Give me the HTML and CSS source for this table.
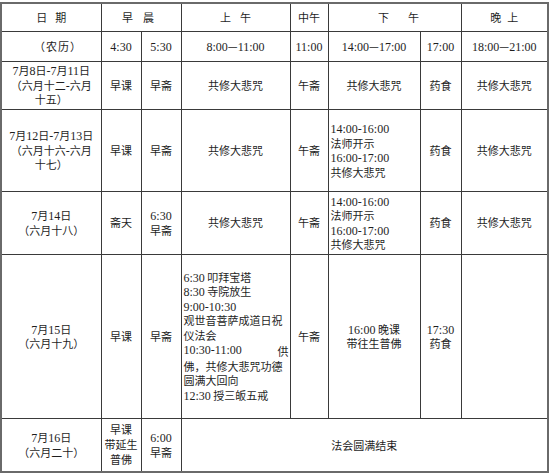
FILE: index.html
```html
<!DOCTYPE html>
<html lang="zh">
<head>
<meta charset="utf-8">
<title>法会日程</title>
<link rel="stylesheet" href="styles.css">
</head>
<body>
<table class="sched">
  <colgroup>
    <col class="c1"><col class="c2"><col class="c3"><col class="c4"><col class="c5"><col class="c6"><col class="c7"><col class="c8">
  </colgroup>
  <tr class="r1">
    <td><span class="h-date">日期</span></td>
    <td colspan="2"><span class="h-morn">早晨</span></td>
    <td><span class="h-am">上午</span></td>
    <td>中午</td>
    <td colspan="2"><span class="h-pm">下午</span></td>
    <td><span class="h-eve">晚上</span></td>
  </tr>
  <tr class="r2">
    <td class="lunar"><span class="lunar-text">（农历）</span></td>
    <td><span class="n">4:30</span></td>
    <td><span class="n">5:30</span></td>
    <td><span class="n">8:00</span>—<span class="n">11:00</span></td>
    <td><span class="n">11:00</span></td>
    <td><span class="n">14:00</span>—<span class="n">17:00</span></td>
    <td><span class="n">17:00</span></td>
    <td><span class="n">18:00</span>—<span class="n">21:00</span></td>
  </tr>
  <tr class="r3">
    <td><span class="n">7</span>月<span class="n">8</span>日<span class="n">-7</span>月<span class="n">11</span>日<br>（六月十二<span class="n">-</span>六月<br>十五）</td>
    <td>早课</td>
    <td>早斋</td>
    <td>共修大悲咒</td>
    <td>午斋</td>
    <td>共修大悲咒</td>
    <td>药食</td>
    <td>共修大悲咒</td>
  </tr>
  <tr class="r4">
    <td><span class="n">7</span>月<span class="n">12</span>日<span class="n">-7</span>月<span class="n">13</span>日<br>（六月十六<span class="n">-</span>六月<br>十七）</td>
    <td>早课</td>
    <td>早斋</td>
    <td>共修大悲咒</td>
    <td>午斋</td>
    <td class="left"><span class="n">14:00-16:00</span><br>法师开示<br><span class="n">16:00-17:00</span><br>共修大悲咒</td>
    <td>药食</td>
    <td>共修大悲咒</td>
  </tr>
  <tr class="r5">
    <td><span class="n">7</span>月<span class="n">14</span>日<br>（六月十八）</td>
    <td>斋天</td>
    <td><span class="n">6:30</span><br>早斋</td>
    <td>共修大悲咒</td>
    <td>午斋</td>
    <td class="left"><span class="n">14:00-16:00</span><br>法师开示<br><span class="n">16:00-17:00</span><br>共修大悲咒</td>
    <td>药食</td>
    <td>共修大悲咒</td>
  </tr>
  <tr class="r6">
    <td><span class="n">7</span>月<span class="n">15</span>日<br>（六月十九）</td>
    <td>早课</td>
    <td>早斋</td>
    <td class="left long"><span class="n">6:30</span> 叩拜宝塔<br><span class="n">8:30</span> 寺院放生<br><span class="n">9:00-10:30</span><br>观世音菩萨成道日祝<br>仪法会<br><span class="just"><span class="n">10:30-11:00</span>供</span><br>佛，共修大悲咒功德<br>圆满大回向<br><span class="n">12:30</span> 授三皈五戒</td>
    <td>午斋</td>
    <td><span class="n">16:00</span> 晚课<br>带往生普佛</td>
    <td><span class="n">17:30</span><br>药食</td>
    <td></td>
  </tr>
  <tr class="r7">
    <td><span class="n">7</span>月<span class="n">16</span>日<br>（六月二十）</td>
    <td class="tall">早课<br>带延生<br>普佛</td>
    <td><span class="n">6:00</span><br>早斋</td>
    <td colspan="5">法会圆满结束</td>
  </tr>
</table>
</body>
</html>
```

FILE: styles.css
```css
html, body {
  margin: 0;
  padding: 0;
  background: #ffffff;
}

body {
  font-family: "Noto Sans CJK SC", "Noto Sans", sans-serif;
  font-size: 11px;
  color: #1e1e1e;
}

.sched {
  border-collapse: collapse;
  table-layout: fixed;
  width: 547px;
  margin-top: 2px;
  border: 2px solid #6a6a6a;
}

.c1 { width: 100px; }
.c2 { width: 40px; }
.c3 { width: 40px; }
.c4 { width: 109px; }
.c5 { width: 38px; }
.c6 { width: 92px; }
.c7 { width: 41px; }
.c8 { width: 87px; }

.sched td {
  border: 1px solid #3a3a3a;
  padding: 0 1px;
  text-align: center;
  vertical-align: middle;
  line-height: 14.5px;
  white-space: nowrap;
}

.r1 { height: 28px; }
.r2 { height: 30px; }
.r3 { height: 48px; }
.r4 { height: 82px; }
.r5 { height: 63px; }
.r6 { height: 164px; }
.r7 { height: 54px; }

.n {
  font-family: "Liberation Serif", serif;
  font-size: 12px;
  line-height: 1;
}

.h-date { letter-spacing: 8px; padding-left: 8px; }
.h-morn { letter-spacing: 10px; padding-left: 4px; }
.h-am { letter-spacing: 9px; padding-left: 9px; }
.h-pm { letter-spacing: 19px; padding-left: 27px; }
.h-eve { letter-spacing: 6px; padding-left: 6px; }

.sched td.lunar {
  text-align: left;
  padding-left: 32px;
}

.lunar-text {
  letter-spacing: 1px;
}

.sched td.left {
  text-align: left;
  padding-left: 2px;
}

.sched td.long {
  line-height: 14.5px;
  padding-right: 1px;
}

.just {
  display: inline-flex;
  justify-content: space-between;
  width: 105px;
}

.sched td.tall {
  line-height: 15px;
}
```
